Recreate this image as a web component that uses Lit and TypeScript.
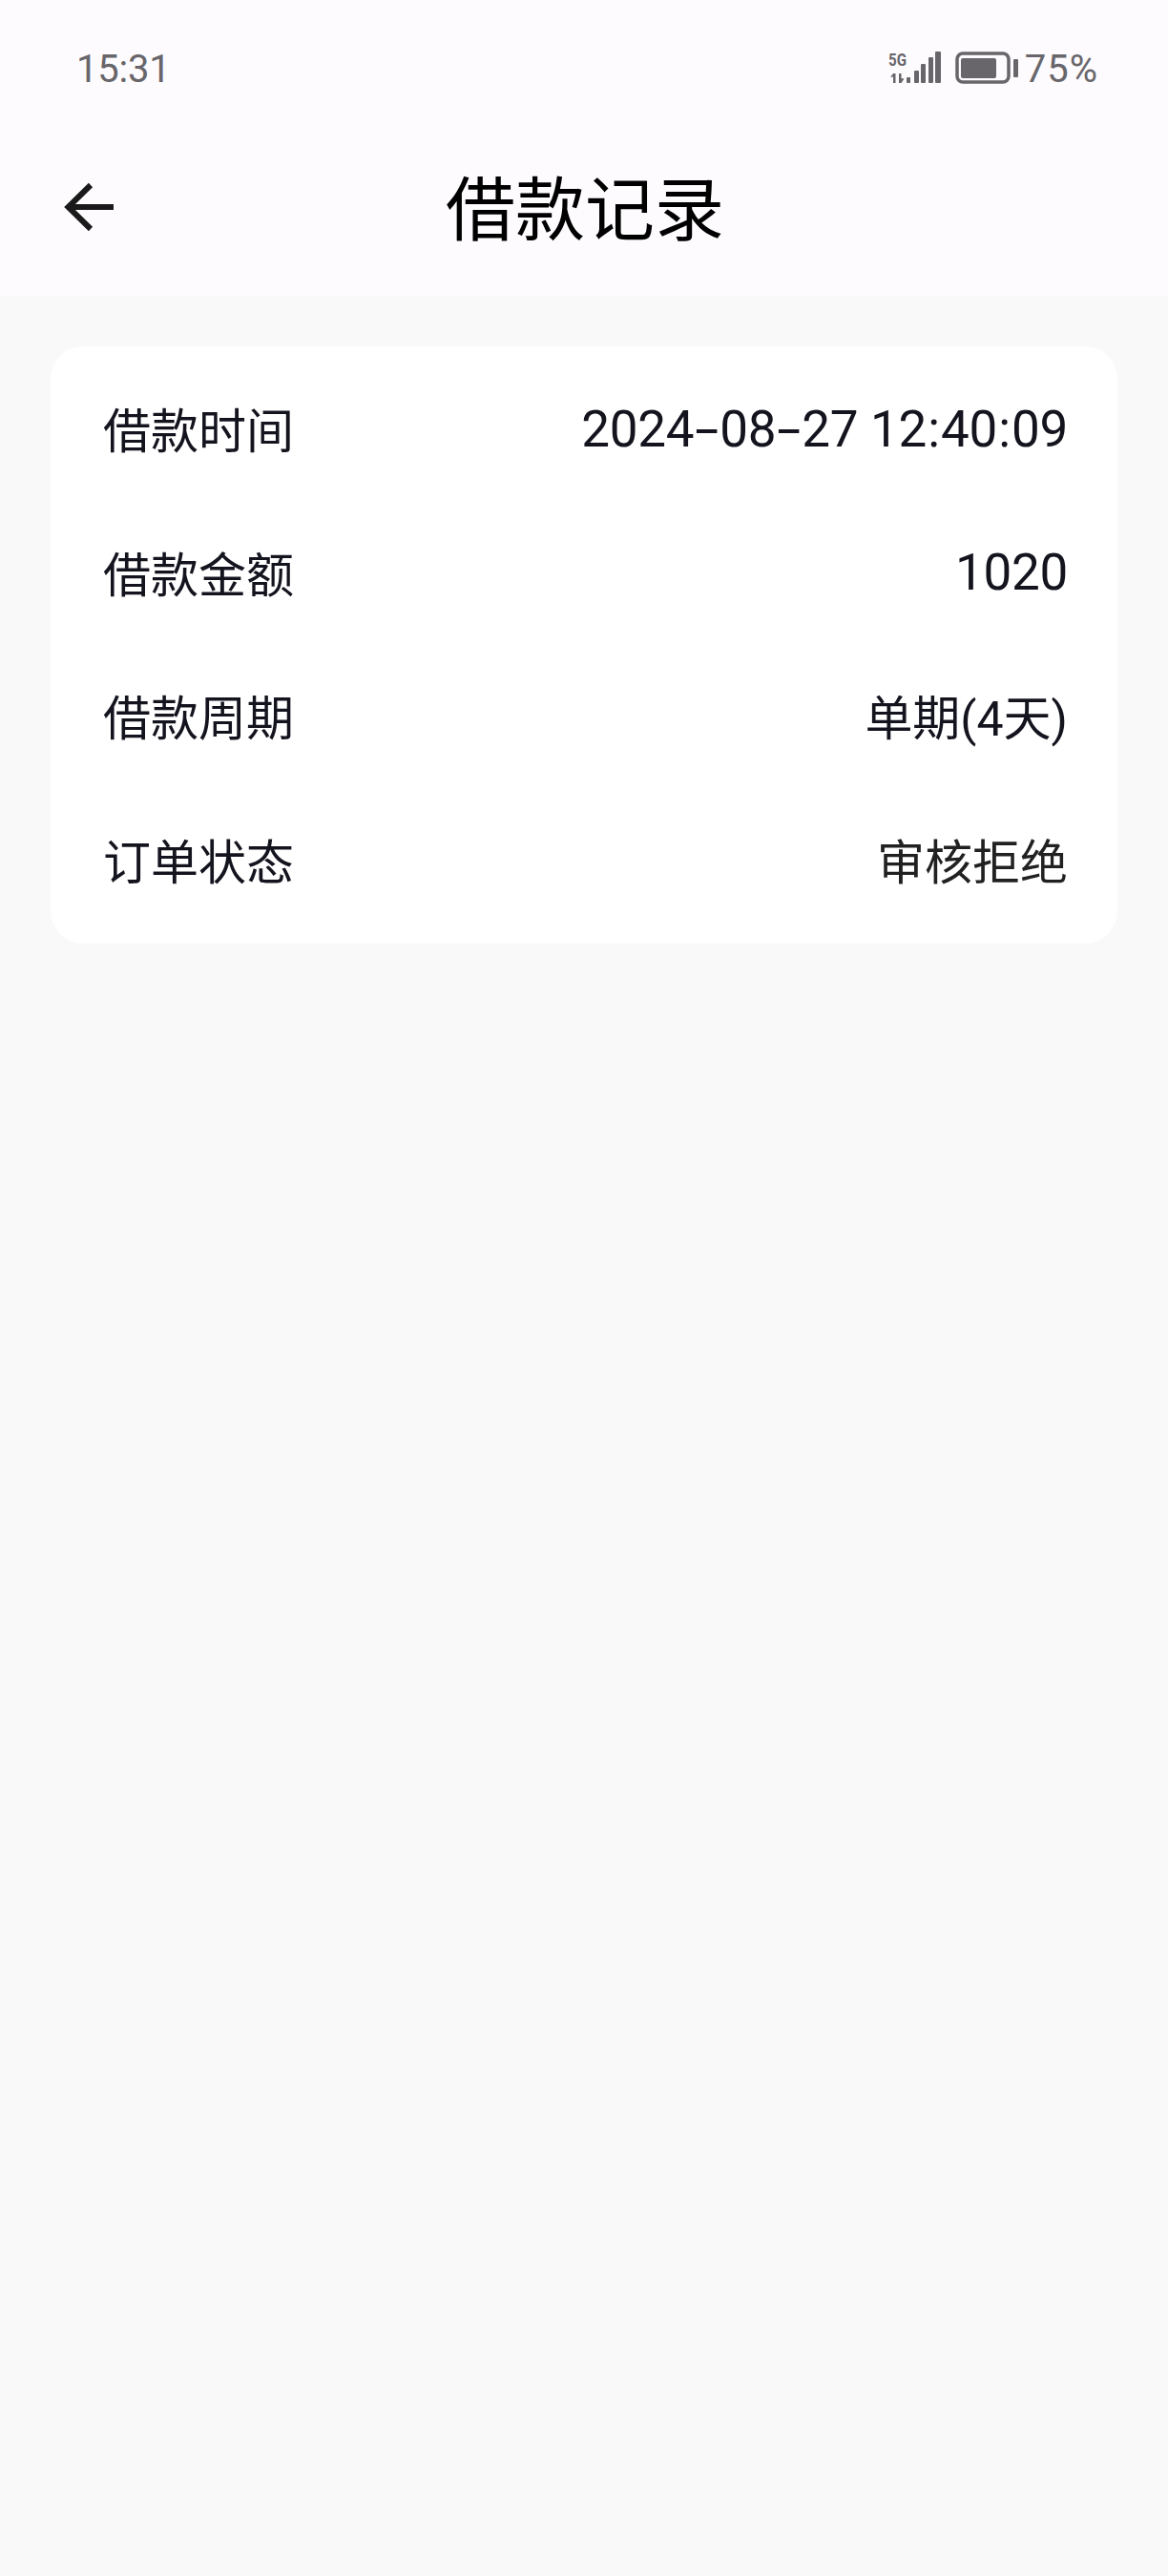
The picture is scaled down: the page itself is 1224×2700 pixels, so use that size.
import { css, html, LitElement } from "lit";
import { customElement } from "lit/decorators.js";

const rows = [
  { label: "借款时间", value: "2024-08-27 12:40:09", kind: "num" },
  { label: "借款金额", value: "1020", kind: "num" },
  { label: "借款周期", value: "单期(4天)", kind: "" },
  { label: "订单状态", value: "审核拒绝", kind: "soft" },
];

@customElement("app-root")
export class AppRoot extends LitElement {
  static styles = css`
    :host {
      display: block;
      width: 1224px;
      height: 2700px;
      background: #f9f9f9;
      font-family: "Roboto", "Noto Sans CJK SC", sans-serif;
      overflow: hidden;
    }
    .top {
      height: 310px;
      background: #fdfbfe;
    }
    .status {
      height: 142px;
      padding: 0 73px 0 80px;
      display: flex;
      align-items: center;
      justify-content: space-between;
      color: #68666a;
      box-sizing: border-box;
    }
    .time {
      font-size: 40px;
      letter-spacing: -0.2px;
      margin-top: 2px;
    }
    .status-right {
      display: flex;
      align-items: center;
    }
    .signal {
      width: 56px;
      height: 37px;
      margin-bottom: 3px;
      overflow: visible;
    }
    .signal text {
      font-family: "Roboto", sans-serif;
      font-size: 18px;
      font-weight: 700;
    }
    .battery {
      width: 67px;
      height: 34px;
      margin-left: 14px;
    }
    .percent {
      font-size: 40px;
      margin-left: 6px;
      margin-top: 2px;
      letter-spacing: 1px;
    }
    .nav {
      height: 168px;
      position: relative;
      display: flex;
      justify-content: center;
      padding-left: 2px;
    }
    .back {
      position: absolute;
      left: 66px;
      top: 48px;
      width: 54px;
      height: 54px;
    }
    .title {
      font-size: 73px;
      font-family: "Noto Sans CJK SC", sans-serif;
      color: #000;
      line-height: 100px;
      margin-top: 22px;
      height: 100px;
    }
    .card {
      margin: 53px 53px 0;
      height: 626px;
      padding: 15px 52px 11px 55px;
      box-sizing: border-box;
      background: #fff;
      border-radius: 34px;
    }
    .row {
      height: 150.5px;
      display: flex;
      align-items: center;
      justify-content: space-between;
      font-size: 50px;
      color: #14141f;
    }
    .label,
    .value {
      line-height: 70px;
    }
    .value.num {
      font-size: 53px;
      letter-spacing: -0.3px;
      padding-bottom: 7px;
    }
    .value.soft {
      color: #212121;
    }
    .dash {
      display: inline-block;
      width: 27px;
      text-align: center;
      transform: scaleX(1.7);
    }
    .colon {
      display: inline-block;
      width: 15px;
      text-align: center;
    }
  `;

  // hyphens and colons sit wider in the device font than in Roboto
  private renderValue(value: string) {
    return value.split(/([-:])/).map((part) => {
      if (part === "-") return html`<span class="dash">-</span>`;
      if (part === ":") return html`<span class="colon">:</span>`;
      return part;
    });
  }

  render() {
    return html`
      <div class="top">
        <div class="status">
          <span class="time">15:31</span>
          <div class="status-right">
            <svg class="signal" viewBox="0 -3 56 37" fill="#68666a">
              <text x="0" y="15" textLength="19" lengthAdjust="spacingAndGlyphs">5G</text>
              <rect x="49" y="0" width="6" height="33" rx="1" />
              <rect x="42" y="6" width="5" height="27" rx="1" />
              <rect x="34" y="13" width="5" height="20" rx="1" />
              <rect x="27" y="20" width="5" height="13" rx="1" />
              <rect x="19" y="27" width="4" height="6" rx="1" />
              <path d="M5 23h2.5v10H5v-6.5L2 27zM11 23h2.5v5l3 .5-3 4.500h-2.500z" />
            </svg>
            <svg class="battery" viewBox="0 0 67 34">
              <rect x="2" y="2" width="54" height="30" rx="6" fill="none" stroke="#68666a" stroke-width="3.500" />
              <rect x="6" y="7" width="37" height="21" rx="2" fill="#68666a" />
              <rect x="61" y="8" width="5" height="19" rx="1" fill="#68666a" />
            </svg>
            <span class="percent">75%</span>
          </div>
        </div>
        <div class="nav">
          <svg class="back" viewBox="0 0 54 54" fill="none" stroke="#1a1a1a" stroke-width="6">
            <path d="M53 27H6M29 4L5.500 27L29 50" />
          </svg>
          <span class="title">借款记录</span>
        </div>
      </div>
      <div class="card">
        ${rows.map(
          (r) => html`
            <div class="row">
              <span class="label">${r.label}</span>
              <span class="value ${r.kind}">${this.renderValue(r.value)}</span>
            </div>
          `
        )}
      </div>
    `;
  }
}
